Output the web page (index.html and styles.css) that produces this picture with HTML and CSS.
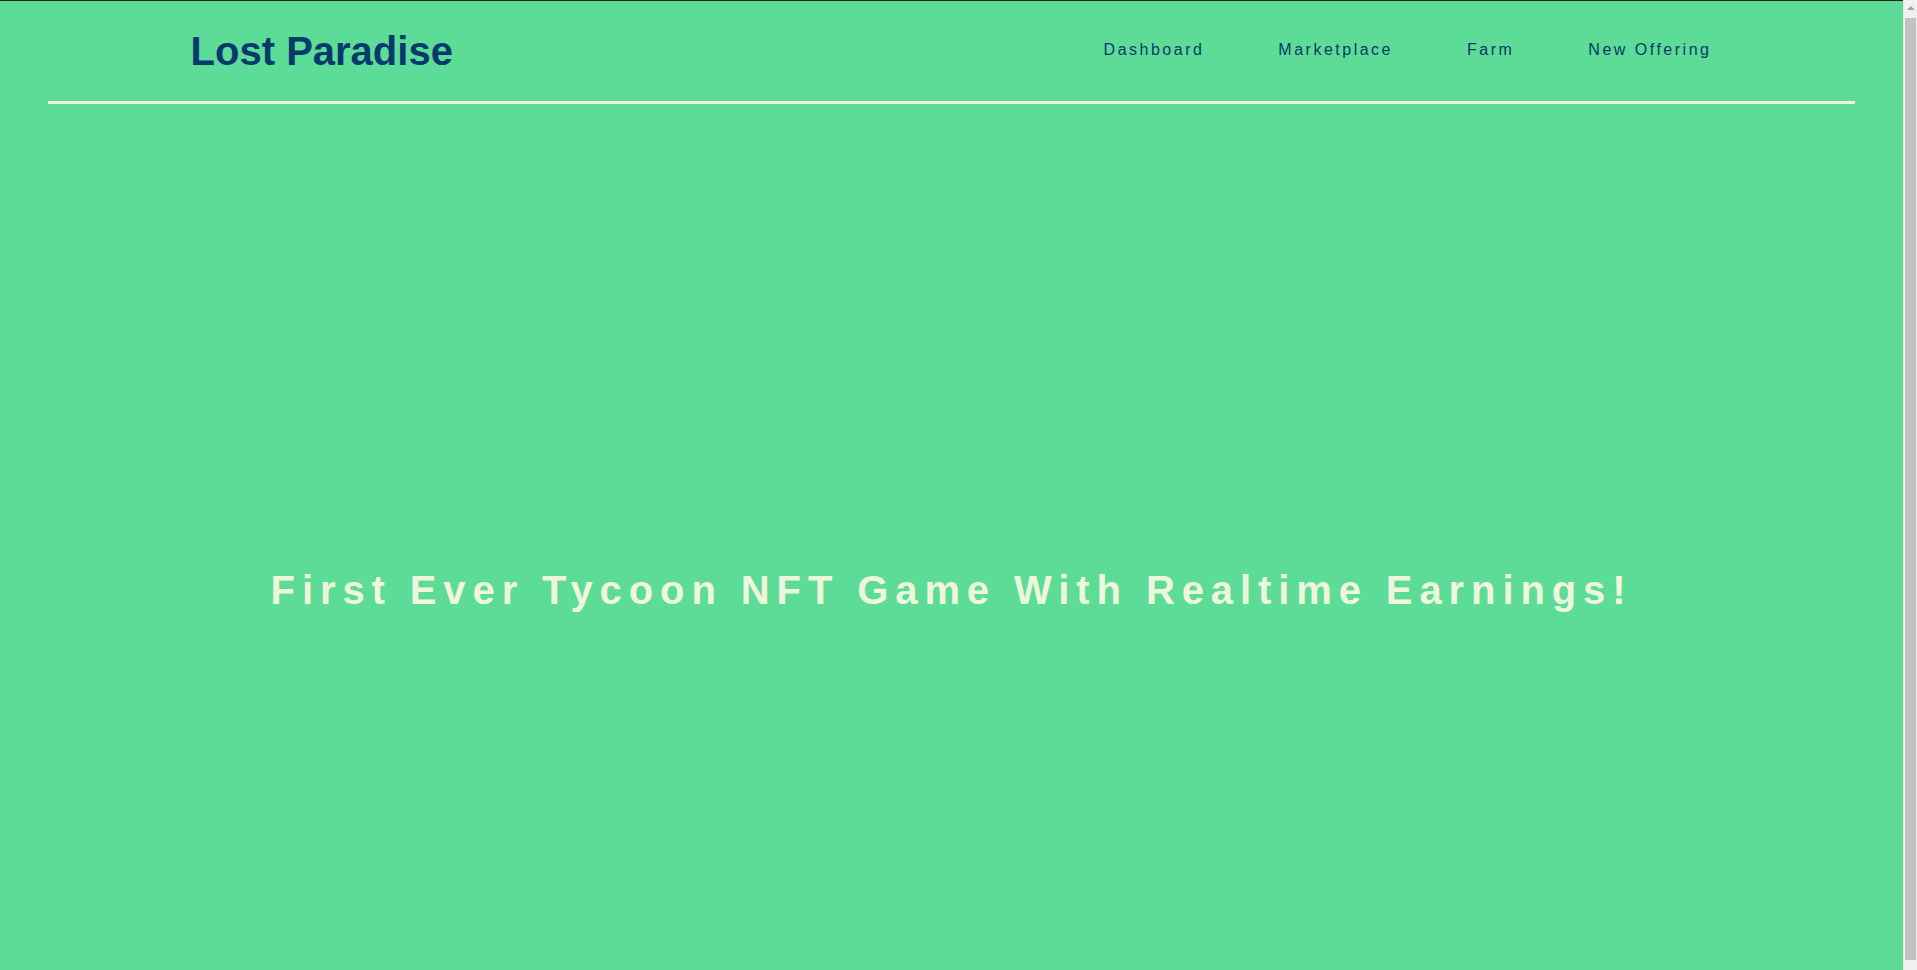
FILE: index.html
```html
<!DOCTYPE html>
<html lang="en">
<head>
<meta charset="utf-8">
<title>Lost Paradise</title>
<link rel="stylesheet" href="styles.css">
</head>
<body>
  <header class="site-header">
    <a class="logo" href="#">Lost Paradise</a>
    <nav class="nav">
      <a class="nav-link" href="#">Dashboard</a>
      <a class="nav-link" href="#">Marketplace</a>
      <a class="nav-link" href="#">Farm</a>
      <a class="nav-link" href="#">New Offering</a>
    </nav>
  </header>
  <main class="hero">
    <h1 class="hero-title">First Ever Tycoon NFT Game With Realtime Earnings!</h1>
  </main>
  <div class="scrollbar" aria-hidden="true">
    <div class="scroll-arrow"></div>
    <div class="scroll-thumb"></div>
  </div>
</body>
</html>
```
FILE: styles.css
```css
html {
  background: #5cdc96;
}
body {
  margin: 0 14px 0 0;
  border-top: 1px solid #232323;
  background: #5cdc96;
  font-family: "Liberation Sans", Arial, sans-serif;
}
.site-header {
  width: 95%;
  margin: 0 auto;
  height: 103px;
  box-sizing: border-box;
  padding: 0 144px 0 143px;
  display: flex;
  align-items: center;
  justify-content: space-between;
  border-bottom: 3px solid #eef5dc;
}
.logo {
  font-size: 40px;
  font-weight: bold;
  color: #073a6c;
  text-decoration: none;
  line-height: 46px;
}
.nav {
  display: flex;
  gap: 74px;
  margin-bottom: 2px;
}
.nav-link {
  font-size: 16px;
  letter-spacing: 2.5px;
  color: #0b3a6b;
  text-decoration: none;
  line-height: 18px;
}
.hero {
  padding: 463px 0 367px;
}
.hero-title {
  margin: 0;
  text-align: center;
  font-size: 40px;
  line-height: 46px;
  font-weight: bold;
  letter-spacing: 6.9px;
  color: #eef6dc;
}
.scrollbar {
  position: fixed;
  top: 0;
  right: 0;
  bottom: 0;
  width: 14px;
  box-sizing: border-box;
  background: #f1f1f1;
  border-left: 1px solid #e8e8e8;
  display: flex;
  flex-direction: column;
  align-items: center;
}
.scroll-arrow {
  margin-top: 6px;
  width: 0;
  height: 0;
  border-left: 4px solid transparent;
  border-right: 4px solid transparent;
  border-bottom: 4px solid #a3a3a3;
}
.scroll-thumb {
  margin-top: 8px;
  width: 11px;
  height: 942px;
  background: #c1c1c1;
}
```
